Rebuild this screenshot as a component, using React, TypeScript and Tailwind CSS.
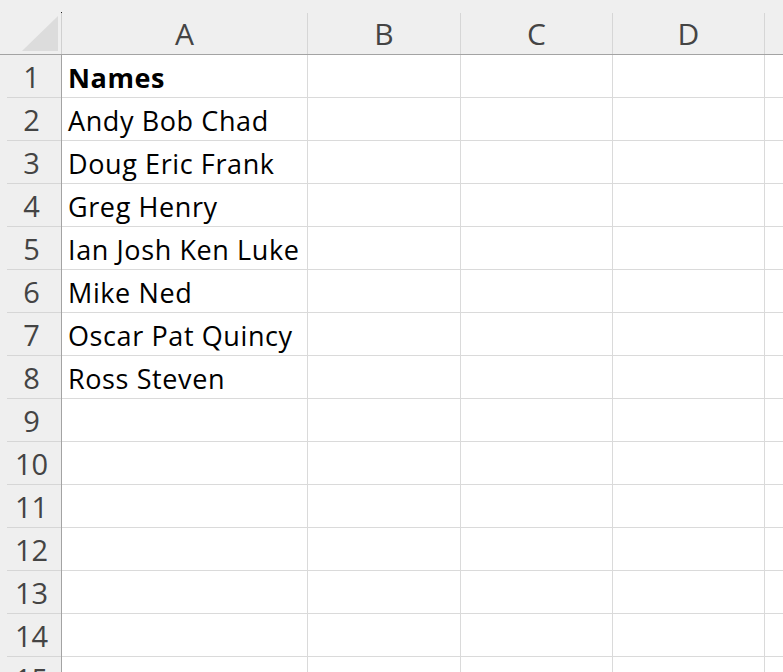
import React from "react";

const cols = ["A", "B", "C", "D", "E"];
const widths = ["w-[246px]", "w-[153px]", "w-[152px]", "w-[152px]", "w-[152px]"];
const data: Record<number, { text: string; bold?: boolean }> = {
  1: { text: "Names", bold: true },
  2: { text: "Andy Bob Chad" },
  3: { text: "Doug Eric Frank" },
  4: { text: "Greg Henry" },
  5: { text: "Ian Josh Ken Luke" },
  6: { text: "Mike Ned" },
  7: { text: "Oscar Pat Quincy" },
  8: { text: "Ross Steven" },
};

const hdrFont = { fontFamily: "'Open Sans', 'Noto Sans', sans-serif" };
const cellFont = { fontFamily: "'Open Sans', 'Noto Sans', sans-serif" };

export default function App() {
  const rows = Array.from({ length: 15 }, (_, i) => i + 1);
  return (
    <div className="w-[783px] h-[672px] overflow-hidden bg-white">
      {/* header row */}
      <div className="flex h-[55px] bg-[#efefef] border-b border-[#a3a3a3] w-max">
        <div className="w-[62px] shrink-0 flex">
          <div className="flex-1 flex items-end justify-end pb-[3px] pr-[3px]">
            <svg width="36" height="35" viewBox="0 0 36 35">
              <polygon points="36,0 36,35 0,35" fill="#dcdcdc" />
            </svg>
          </div>
          <div className="w-px mt-[12px] flex flex-col">
            <div className="h-px bg-[#222]" />
            <div className="flex-1 bg-[#d0d0d0]" />
          </div>
        </div>
        {cols.map((c, i) => (
          <div key={c} className={`${widths[i]} shrink-0 flex`}>
            <div
              className="flex-1 flex items-end justify-center pb-[1px] text-[30px] leading-none text-[#444]"
              style={hdrFont}
            >
              <span className="pb-[4px]">{c === "E" ? "" : c}</span>
            </div>
            <div className="w-px mt-[13px] bg-[#d6d6d6]" />
          </div>
        ))}
      </div>
      {rows.map((r) => (
        <div key={r} className="flex h-[43px] w-max">
          <div className="w-[62px] shrink-0 flex bg-[#efefef] border-r border-[#a3a3a3]">
            <div
              className="flex-1 ml-[7px] border-b border-[#d6d6d6] flex items-end justify-center pr-[5px] pb-[2px] text-[29px] leading-none text-[#444]"
              style={hdrFont}
            >
              <span className="pb-[4px]">{r}</span>
            </div>
          </div>
          {cols.map((c, i) => (
            <div
              key={c}
              className={`${widths[i]} shrink-0 border-r border-b border-[#dadada] flex items-end pl-[6px] pb-[2px] text-[27px] tracking-[0.6px] leading-none text-black whitespace-nowrap ${
                c === "A" && data[r]?.bold ? "font-bold" : ""
              }`}
              style={cellFont}
            >
              <span className="pb-[4px]">{c === "A" && data[r] ? data[r].text : ""}</span>
            </div>
          ))}
        </div>
      ))}
    </div>
  );
}
